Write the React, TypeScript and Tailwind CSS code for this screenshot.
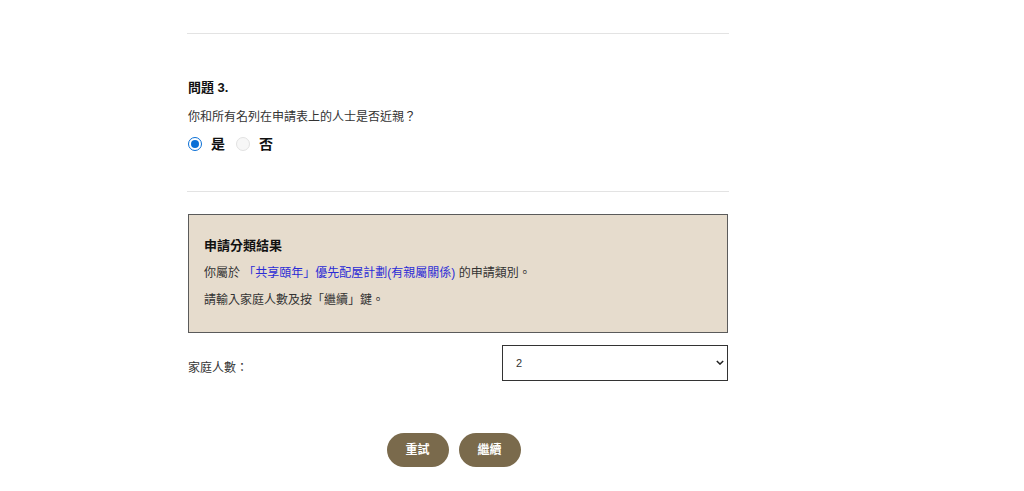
import { useState } from 'react'

export default function App() {
  const [answer, setAnswer] = useState<'yes' | 'no'>('yes')
  const [size, setSize] = useState('2')

  return (
    <div className="min-h-[491px] bg-white text-[#222] font-['Liberation_Sans','Noto_Sans_CJK_TC',sans-serif]">
      <div className="ml-[187px] w-[542px] pt-[33px]">
        <hr className="border-t border-[#e3e3e3]" />

        {/* Question */}
        <div className="pl-px pt-[45px] pb-[37px]">
          <h3 className="text-[13px] font-bold leading-[18px] text-[#111]">問題 3.</h3>
          <p className="mt-[11px] text-[12px] leading-[18px] text-[#333]">
            你和所有名列在申請表上的人士是否近親？
          </p>
          <div className="mt-[8px] flex items-center text-[14px] font-bold leading-5 text-[#111]">
            <button
              onClick={() => setAnswer('yes')}
              className="flex items-center gap-[9px]"
            >
              <Radio checked={answer === 'yes'} />
              <span>是</span>
            </button>
            <button
              onClick={() => setAnswer('no')}
              className="ml-[11px] flex items-center gap-[9px]"
            >
              <Radio checked={answer === 'no'} />
              <span>否</span>
            </button>
          </div>
        </div>

        <hr className="border-t border-[#e3e3e3]" />

        {/* Result box */}
        <div className="mx-px mt-[22px] h-[119px] border border-[#5b5b5b] bg-[#e6dccd] px-[15px] pt-[22px]">
          <h4 className="text-[13px] font-bold leading-[18px] text-[#111]">申請分類結果</h4>
          <p className="mt-[9px] text-[12px] leading-[18px] text-[#333]">
            你屬於 <span className="text-[#2b2bd6]">「共享頤年」優先配屋計劃(有親屬關係)</span> 的申請類別。
          </p>
          <p className="mt-[9px] text-[12px] leading-[18px] text-[#333]">
            請輸入家庭人數及按「繼續」鍵。
          </p>
        </div>

        {/* Family size */}
        <div className="mt-[12px] flex items-center justify-between px-px">
          <label className="mt-[9px] text-[12px] leading-[18px] text-[#333]">家庭人數：</label>
          <div className="relative w-[226px]">
            <select
              value={size}
              onChange={(e) => setSize(e.target.value)}
              className="h-[36px] w-full appearance-none border border-[#333] bg-white pl-[13px] text-[11px] text-[#333] outline-none"
            >
              {['1', '2', '3', '4', '5', '6', '7', '8'].map((n) => (
                <option key={n} value={n}>{n}</option>
              ))}
            </select>
            <svg
              viewBox="0 0 10 6"
              className="pointer-events-none absolute right-[4px] top-[15px] h-[5px] w-[8px]"
            >
              <path d="M1 1l4 4 4-4" fill="none" stroke="#222" strokeWidth="1.8" />
            </svg>
          </div>
        </div>

        {/* Buttons */}
        <div className="mt-[52px] flex justify-center gap-[10px] pr-[9px]">
          <button className="h-[34px] w-[62px] rounded-full bg-[#7a6a4c] text-[12px] font-bold text-white">
            重試
          </button>
          <button className="h-[34px] w-[62px] rounded-full bg-[#7a6a4c] text-[12px] font-bold text-white">
            繼續
          </button>
        </div>
      </div>
    </div>
  )
}

function Radio({ checked }: { checked: boolean }) {
  return checked ? (
    <span className="flex h-[14px] w-[14px] items-center justify-center rounded-full border border-[#0a6fd6] bg-white">
      <span className="h-[8px] w-[8px] rounded-full bg-[#0a6fd6]" />
    </span>
  ) : (
    <span className="h-[14px] w-[14px] rounded-full border border-[#e2e2e2] bg-[#f7f7f7]" />
  )
}
